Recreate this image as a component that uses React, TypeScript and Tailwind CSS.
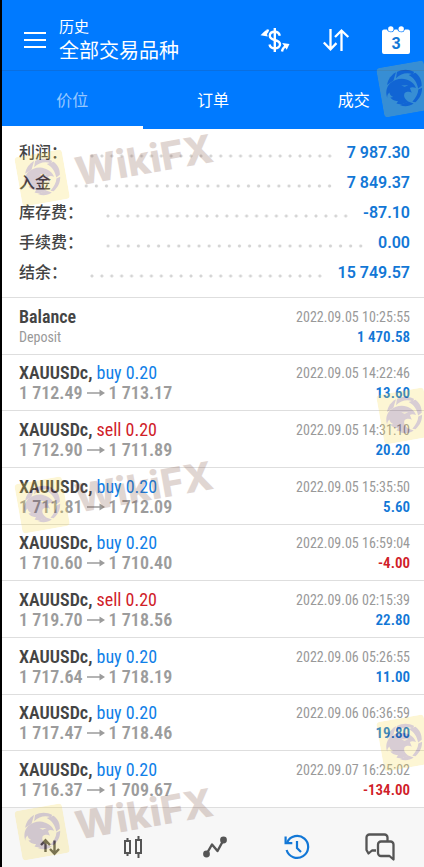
import type { ReactNode } from "react";

type Deal = { side: "buy" | "sell"; open: string; close: string; time: string; profit: string };

const summary = [
  { label: "利润：", value: "7 987.30" },
  { label: "入金", value: "7 849.37" },
  { label: "库存费：", value: "-87.10" },
  { label: "手续费：", value: "0.00" },
  { label: "结余：", value: "15 749.57" },
];

const deals: Deal[] = [
  { side: "buy", open: "1 712.49", close: "1 713.17", time: "2022.09.05 14:22:46", profit: "13.60" },
  { side: "sell", open: "1 712.90", close: "1 711.89", time: "2022.09.05 14:31:10", profit: "20.20" },
  { side: "buy", open: "1 711.81", close: "1 712.09", time: "2022.09.05 15:35:50", profit: "5.60" },
  { side: "buy", open: "1 710.60", close: "1 710.40", time: "2022.09.05 16:59:04", profit: "-4.00" },
  { side: "sell", open: "1 719.70", close: "1 718.56", time: "2022.09.06 02:15:39", profit: "22.80" },
  { side: "buy", open: "1 717.64", close: "1 718.19", time: "2022.09.06 05:26:55", profit: "11.00" },
  { side: "buy", open: "1 717.47", close: "1 718.46", time: "2022.09.06 06:36:59", profit: "19.80" },
  { side: "buy", open: "1 716.37", close: "1 709.67", time: "2022.09.07 16:25:02", profit: "-134.00" },
];

const tabs = ["价位", "订单", "成交"];

function MenuIcon() {
  return (
    <svg width="22" height="16" viewBox="0 0 22 16" stroke="currentColor" strokeWidth="2">
      <path d="M0 1h22M0 8h22M0 15h22" />
    </svg>
  );
}

function CurrencyIcon() {
  return (
    <svg width="30" height="26" viewBox="0 0 30 26" fill="none" stroke="currentColor" strokeWidth="2.4">
      <path d="M19.800 8.800C19.200 6.200 17.200 4.800 14.800 4.800c-3 0-5 1.600-5 4 0 2.500 2 3.400 5 4.200s5.200 1.700 5.200 4.300c0 2.400-2.200 4-5.200 4-2.800 0-4.800-1.400-5.300-3.800" />
      <path d="M14.800 1v24" />
      <path d="M8 2.500C7.500 5 6.200 6.500 3.500 7.200" />
      <path d="M0.500 8.200l5.200-4.900 2 6.300z" fill="currentColor" stroke="none" />
      <path d="M22 24.500c.5-3 1.800-4.600 4.500-5.300" />
      <path d="M29.500 17l-7.300-1 4.500 6.800z" fill="currentColor" stroke="none" />
    </svg>
  );
}

function SortIcon() {
  return (
    <svg width="28" height="24" viewBox="0 0 28 24" fill="none" stroke="currentColor" strokeWidth="2.3">
      <path d="M8.500 1v20M1.800 14.500l6.700 6.800 6-6.200" />
      <path d="M19.500 23V3M13 9l6.500-6.500L26.300 9" />
    </svg>
  );
}

function CalendarIcon() {
  return (
    <svg width="28" height="28" viewBox="0 0 28 28" fill="currentColor">
      <path d="M2 3.500h3a4 4 0 0 0 7.600 0h2.800a4 4 0 0 0 7.600 0H26a2 2 0 0 1 2 2V26a2 2 0 0 1-2 2H2a2 2 0 0 1-2-2V5.500a2 2 0 0 1 2-2z" />
      <circle cx="8.800" cy="2.900" r="2.700" />
      <circle cx="19.200" cy="2.900" r="2.700" />
      <text x="14" y="23" textAnchor="middle" className="fill-[#1277d6] font-['Roboto',sans-serif] text-[16px] font-bold">
        3
      </text>
    </svg>
  );
}

function QuotesIcon() {
  return (
    <svg width="20" height="18" viewBox="0 0 20 18" fill="none" stroke="currentColor" strokeWidth="2.400">
      <path d="M5.500 14V2.500M1 7l4.500-4.700L10 7" />
      <path d="M14.500 2.500v13M10 11l4.500 4.700L19 11" />
    </svg>
  );
}

function CandlesIcon() {
  return (
    <svg width="20" height="24" viewBox="0 0 20 24" fill="none" stroke="currentColor" strokeWidth="2">
      <rect x="2" y="6" width="5" height="12" />
      <rect x="13" y="5" width="5" height="13" />
      <path d="M4.500 3v3M4.500 18v3M15.500 1v4M15.500 18v5" />
    </svg>
  );
}

function TradeIcon() {
  return (
    <svg width="24" height="22" viewBox="0 0 24 22" fill="none" stroke="currentColor" strokeWidth="2.400">
      <path d="M3.500 18L9 8.500l5.500 6.500L20.500 4" strokeLinejoin="round" />
      <circle cx="3.500" cy="18" r="3.400" fill="currentColor" stroke="none" />
      <circle cx="20.500" cy="4" r="3.400" fill="currentColor" stroke="none" />
    </svg>
  );
}

function HistoryIcon() {
  return (
    <svg width="26" height="26" viewBox="0 0 26 26" fill="none" stroke="currentColor" strokeWidth="2.200">
      <path d="M3.200 8.200A11 11 0 1 1 2.600 16" />
      <path d="M1.600 2.500v6.700h6.700" />
      <path d="M13 7v7l4 4" />
    </svg>
  );
}

function ChatIcon() {
  return (
    <svg width="30" height="28" viewBox="0 0 30 28" fill="none" stroke="currentColor" strokeWidth="2.300" strokeLinejoin="round">
      <path d="M11 17.500H7L3.500 20.500 1.500 17V4.500a3 3 0 0 1 3-3h15a3 3 0 0 1 3 3V8" />
      <path d="M16 8.500h9.500a3 3 0 0 1 3 3v15l-4-3.500H16a3 3 0 0 1-3-3v-8.500a3 3 0 0 1 3-3z" />
    </svg>
  );
}

const navItems: { name: string; icon: ReactNode; active?: boolean }[] = [
  { name: "行情", icon: <QuotesIcon /> },
  { name: "图表", icon: <CandlesIcon /> },
  { name: "交易", icon: <TradeIcon /> },
  { name: "历史", icon: <HistoryIcon />, active: true },
  { name: "消息", icon: <ChatIcon /> },
];

// eagle head inside a camera-shutter ring
function BrandMark() {
  return (
    <svg className="shrink-0" width="48" height="50" viewBox="0 0 48 50">
      <rect width="48" height="50" rx="4" fill="#f8d840" />
      <g fill="#502040">
        <path d="M8 18C10 12 14 9 19 7L15 15z" />
        <path d="M20 7C26 5 32 6 37 10L35 12C30 9 24 9 18 13z" />
        <path d="M38 11c4 4 5 9 4 14l-4 2c0-6-2-11-7-15z" />
        <path d="M42 27c-1 6-4 10-9 13l-3-1c4-3 7-7 8-11z" />
        <path d="M31 41c-5 2-9 2-14-1l9-2z" />
        <path d="M6 31C5 25 7 20 11 17c5-3 12-4 17-1 4 2 7 5 8 10-2-1-4-2-6-1l1 5c-2-2-5-2-7-1-2 3-1 6 2 9-5 2-9 2-12 0l2-2c-4-1-6-3-7-5l3 0c-2-1-3-3-3-5-2 1-3 3-3 5z" />
      </g>
      <path d="M22 21l7 1-4 1z" fill="#f8d840" />
    </svg>
  );
}

function Watermark() {
  return (
    <div className="flex -rotate-10 items-center gap-[10px] opacity-[0.22]">
      <BrandMark />
      <span className="font-['Inter',sans-serif] text-[39px] leading-[50px] font-extrabold text-[#784838]">WikiFX</span>
    </div>
  );
}

function Row({ children }: { children: ReactNode }) {
  return (
    <li className="flex items-center justify-between border-t border-[#dedede] pt-[2px] pr-[14px] pl-[17px] leading-5">
      {children}
    </li>
  );
}

function Result({ time, value }: { time: string; value: string }) {
  return (
    <div className="text-right">
      <p className="text-[14px] text-[#999]">{time}</p>
      <p className={value.startsWith("-") ? "text-[15px] font-semibold text-[#d02028]" : "text-[15px] font-semibold text-[#1277d6]"}>
        {value}
      </p>
    </div>
  );
}

export default function App() {
  return (
    <div className="relative flex min-h-screen flex-col border-l-2 border-black bg-white font-['Roboto','Noto_Sans_CJK_SC',sans-serif]">
      <header className="bg-[#007aff] text-white">
        <div className="flex items-center border-b border-[#0a6fe0] pt-[16px] pr-[14px] pb-[6px] pl-[22px]">
          <button aria-label="菜单">
            <MenuIcon />
          </button>
          <h1 className="ml-[13px] flex-1 font-normal">
            <span className="block text-[15px] leading-[22px]">历史</span>
            <span className="block text-[20px] leading-[26px]">全部交易品种</span>
          </h1>
          <div className="flex items-center gap-8">
            <button aria-label="货币">
              <CurrencyIcon />
            </button>
            <button aria-label="排序">
              <SortIcon />
            </button>
            <button aria-label="日期">
              <CalendarIcon />
            </button>
          </div>
        </div>
        <nav className="grid grid-cols-3">
          {tabs.map((tab, i) => (
            <button
              key={tab}
              className={
                i === 0
                  ? "border-b-3 border-white pt-[4px] text-[16px] leading-[51px] text-white/60"
                  : "border-b-3 border-transparent pt-[4px] text-[16px] leading-[51px]"
              }
            >
              {tab}
            </button>
          ))}
        </nav>
      </header>

      {/* Totals */}
      <dl className="pt-[9px] pr-[14px] pb-[9px] pl-[17px]">
        {summary.map((item) => (
          <div key={item.label} className="flex items-center leading-[30px]">
            <dt className="text-[16px] font-medium text-[#444]">{item.label}</dt>
            <div className="mt-[6px] mr-3 ml-5 h-1 flex-1 bg-[radial-gradient(circle,#d4d4d4_1px,transparent_2px)] bg-[length:10px_4px] [background-repeat:round]" />
            <dd className="text-[16px] font-semibold text-[#1277d6]">{item.value}</dd>
          </div>
        ))}
      </dl>

      {/* Deals */}
      <ul className="grid flex-1 auto-rows-fr font-['Roboto_Condensed','Roboto',sans-serif]">
        <Row>
          <div>
            <p className="text-[18px] font-semibold text-[#444]">Balance</p>
            <p className="text-[14px] text-[#999]">Deposit</p>
          </div>
          <Result time="2022.09.05 10:25:55" value="1 470.58" />
        </Row>
        {deals.map((deal) => (
          <Row key={deal.time}>
            <div className="text-[18px]">
              <p>
                <span className="font-semibold text-[#444]">XAUUSDc,</span>{" "}
                <span className={deal.side === "buy" ? "text-[#1080e8]" : "text-[#d02028]"}>{deal.side} 0.20</span>
              </p>
              <p className="flex items-center gap-1 font-semibold text-[#9c9c9c]">
                {deal.open}
                <svg width="18" height="8" viewBox="0 0 18 8" fill="currentColor">
                  <path d="M0 3.200h12.500V.500L18 4l-5.500 3.500V4.800H0z" />
                </svg>
                {deal.close}
              </p>
            </div>
            <Result time={deal.time} value={deal.profit} />
          </Row>
        ))}
      </ul>

      <nav className="grid grid-cols-5 border-t border-[#dedede] bg-[#f7f7f7] pt-6 pr-[3px] pb-[5px] pl-[7px]">
        {navItems.map((item) => (
          <button
            key={item.name}
            aria-label={item.name}
            className={
              item.active
                ? "flex h-[30px] items-center justify-center text-[#1277d6]"
                : "flex h-[30px] items-center justify-center text-[#555]"
            }
          >
            {item.icon}
          </button>
        ))}
      </nav>

      {/* Watermarks */}
      <div className="pointer-events-none absolute inset-0 overflow-hidden" aria-hidden="true">
        <div className="absolute top-[140px] left-[15px]">
          <Watermark />
        </div>
        <div className="absolute top-[467px] left-[15px]">
          <Watermark />
        </div>
        <div className="absolute top-[794px] left-[15px]">
          <Watermark />
        </div>
        <div className="absolute top-[64px] left-[378px] -rotate-10 opacity-[0.22]">
          <BrandMark />
        </div>
        <div className="absolute top-[391px] left-[378px] -rotate-10 opacity-[0.22]">
          <BrandMark />
        </div>
        <div className="absolute top-[718px] left-[378px] -rotate-10 opacity-[0.22]">
          <BrandMark />
        </div>
      </div>
    </div>
  );
}
